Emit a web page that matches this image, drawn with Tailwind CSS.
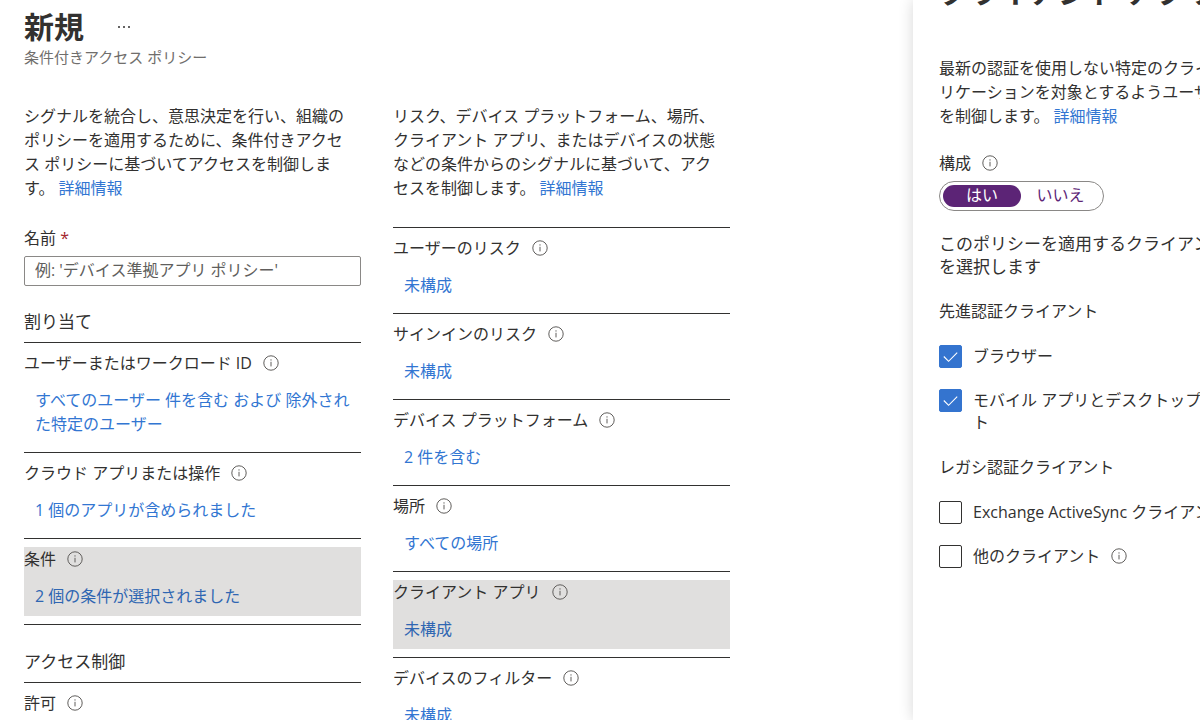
<!DOCTYPE html>
<html lang="ja">
<head>
  <meta charset="UTF-8" />
  <meta name="viewport" content="width=device-width, initial-scale=1.0" />
  <title>新規 - 条件付きアクセス ポリシー</title>
  <script src="https://cdn.jsdelivr.net/npm/@tailwindcss/browser@4"></script>
</head>
<body class="flex h-screen overflow-hidden bg-white font-['Open_Sans','Noto_Sans_CJK_JP',sans-serif] text-[16px] leading-[24px] text-[#323130]">

  <!-- info icon, reused below -->
  <svg class="hidden" aria-hidden="true">
    <symbol id="info" viewBox="0 0 16 16">
      <circle cx="8" cy="8" r="7.2" fill="none" stroke="currentColor" stroke-width="1" />
      <path d="M8 6.8v4.6" stroke="currentColor" stroke-width="1" />
      <circle cx="8" cy="4.9" r="0.7" fill="currentColor" />
    </symbol>
  </svg>

  <main class="w-[913px] shrink-0 pl-6 pt-[9px]">
    <header>
      <div class="flex items-center gap-8">
        <h1 class="text-[30px] leading-[36px] font-bold">新規</h1>
        <button type="button" aria-label="その他" class="flex h-6 w-4 items-center justify-between px-0.5">
          <span class="size-0.5 rounded-full bg-[#323130]"></span>
          <span class="size-0.5 rounded-full bg-[#323130]"></span>
          <span class="size-0.5 rounded-full bg-[#323130]"></span>
        </button>
      </div>
      <p class="text-[15px] text-[#706e6c]">条件付きアクセス ポリシー</p>
    </header>

    <div class="mt-[35px] flex gap-8">
      <section class="w-[337px]">
        <p>シグナルを統合し、意思決定を行い、組織の<br />ポリシーを適用するために、条件付きアクセ<br />ス ポリシーに基づいてアクセスを制御しま<br />す。 <a href="#" class="text-[#3276d2]">詳細情報</a></p>

        <label for="name" class="mt-[26px] block">名前 <span class="text-[#a4262c]">*</span></label>
        <input type="text" id="name" placeholder="例: 'デバイス準拠アプリ ポリシー'" class="mt-1.5 block h-[30px] w-full rounded-xs border border-[#8a8886] px-2.5 pb-0.5 placeholder:text-[#605e5c]" />

        <h2 class="mt-6 mb-2 text-[17px]">割り当て</h2>
        <div class="border-t border-[#323130] pt-2 pb-4">
          <h3 class="flex items-center gap-[11px]">ユーザーまたはワークロード ID <svg class="size-4 text-[#605e5c]"><use href="#info" /></svg></h3>
          <a href="#" class="mt-[13px] ml-[11px] block text-[#3276d2]">すべてのユーザー 件を含む および 除外され<br />た特定のユーザー</a>
        </div>
        <div class="border-t border-[#323130] pt-2 pb-4">
          <h3 class="flex items-center gap-[11px]">クラウド アプリまたは操作 <svg class="size-4 text-[#605e5c]"><use href="#info" /></svg></h3>
          <a href="#" class="mt-[13px] ml-[11px] block text-[#3276d2]">1 個のアプリが含められました</a>
        </div>
        <div class="border-y border-[#323130] py-2">
          <div class="bg-[#e0dfde] pb-2">
            <h3 class="flex items-center gap-[11px]">条件 <svg class="size-4 text-[#605e5c]"><use href="#info" /></svg></h3>
            <a href="#" class="mt-[13px] ml-[11px] block text-[#2f66b2]">2 個の条件が選択されました</a>
          </div>
        </div>

        <h2 class="mt-[25px] mb-2 text-[17px]">アクセス制御</h2>
        <div class="border-t border-[#323130] pt-2 pb-4">
          <h3 class="flex items-center gap-[11px]">許可 <svg class="size-4 text-[#605e5c]"><use href="#info" /></svg></h3>
        </div>
      </section>

      <section class="w-[337px]">
        <p class="mb-[27px]">リスク、デバイス プラットフォーム、場所、<br />クライアント アプリ、またはデバイスの状態<br />などの条件からのシグナルに基づいて、アク<br />セスを制御します。 <a href="#" class="text-[#3276d2]">詳細情報</a></p>

        <div class="border-t border-[#323130] pt-2 pb-4">
          <h3 class="flex items-center gap-[11px]">ユーザーのリスク <svg class="size-4 text-[#605e5c]"><use href="#info" /></svg></h3>
          <a href="#" class="mt-[13px] ml-[11px] block text-[#3276d2]">未構成</a>
        </div>
        <div class="border-t border-[#323130] pt-2 pb-4">
          <h3 class="flex items-center gap-[11px]">サインインのリスク <svg class="size-4 text-[#605e5c]"><use href="#info" /></svg></h3>
          <a href="#" class="mt-[13px] ml-[11px] block text-[#3276d2]">未構成</a>
        </div>
        <div class="border-t border-[#323130] pt-2 pb-4">
          <h3 class="flex items-center gap-[11px]">デバイス プラットフォーム <svg class="size-4 text-[#605e5c]"><use href="#info" /></svg></h3>
          <a href="#" class="mt-[13px] ml-[11px] block text-[#3276d2]">2 件を含む</a>
        </div>
        <div class="border-t border-[#323130] pt-2 pb-4">
          <h3 class="flex items-center gap-[11px]">場所 <svg class="size-4 text-[#605e5c]"><use href="#info" /></svg></h3>
          <a href="#" class="mt-[13px] ml-[11px] block text-[#3276d2]">すべての場所</a>
        </div>
        <div class="border-t border-[#323130] py-2">
          <div class="bg-[#e0dfde] pb-2">
            <h3 class="flex items-center gap-[11px]">クライアント アプリ <svg class="size-4 text-[#605e5c]"><use href="#info" /></svg></h3>
            <a href="#" class="mt-[13px] ml-[11px] block text-[#2f66b2]">未構成</a>
          </div>
        </div>
        <div class="border-t border-[#323130] pt-2 pb-4">
          <h3 class="flex items-center gap-[11px]">デバイスのフィルター <svg class="size-4 text-[#605e5c]"><use href="#info" /></svg></h3>
          <a href="#" class="mt-[13px] ml-[11px] block text-[#3276d2]">未構成</a>
        </div>
      </section>
    </div>
  </main>

  <!-- client apps panel -->
  <aside class="min-w-0 flex-1 bg-white pl-[26px] whitespace-nowrap shadow-[0_0_14px_rgba(0,0,0,0.16)]">
    <h2 class="-mt-[26px] text-[30px] leading-[36px] font-bold">クライアント アプリ</h2>
    <p class="mt-[46px]">最新の認証を使用しない特定のクライアント アプ<br />リケーションを対象とするようユーザーのアクセス<br />を制御します。 <a href="#" class="text-[#3276d2]">詳細情報</a></p>

    <fieldset class="mt-[23px]">
      <legend class="flex items-center gap-[11px]">構成 <svg class="size-4 text-[#605e5c]"><use href="#info" /></svg></legend>
      <div class="mt-1.5 flex h-[30px] w-[165px] rounded-full border border-[#8a8886] p-[3px] leading-[20px] text-[#5c2476]">
        <label class="w-[78px] rounded-full text-center has-checked:bg-[#5c2476] has-checked:text-white"><input type="radio" name="configure" class="sr-only" checked />はい</label>
        <label class="flex-1 rounded-full text-center has-checked:bg-[#5c2476] has-checked:text-white"><input type="radio" name="configure" class="sr-only" />いいえ</label>
      </div>
    </fieldset>

    <p class="mt-[21px] text-[17px] leading-[23px]">このポリシーを適用するクライアント アプリ<br />を選択します</p>

    <h3 class="mt-[21px]">先進認証クライアント</h3>
    <div class="mt-[22px] grid gap-[21px] leading-[22px]">
      <label class="flex items-start gap-[11px]">
        <span class="grid shrink-0">
          <input type="checkbox" class="peer col-start-1 row-start-1 size-[23px] appearance-none rounded-xs border border-[#323130] checked:border-[#3474cf] checked:bg-[#3474cf]" checked />
          <svg class="pointer-events-none col-start-1 row-start-1 hidden size-[23px] text-white peer-checked:block" viewBox="0 0 24 24" fill="none" stroke="currentColor" stroke-width="1.2"><path d="M5 12l5 5 9-9" /></svg>
        </span>
        ブラウザー
      </label>
      <label class="flex items-start gap-[11px]">
        <span class="grid shrink-0">
          <input type="checkbox" class="peer col-start-1 row-start-1 size-[23px] appearance-none rounded-xs border border-[#323130] checked:border-[#3474cf] checked:bg-[#3474cf]" checked />
          <svg class="pointer-events-none col-start-1 row-start-1 hidden size-[23px] text-white peer-checked:block" viewBox="0 0 24 24" fill="none" stroke="currentColor" stroke-width="1.2"><path d="M5 12l5 5 9-9" /></svg>
        </span>
        <span>モバイル アプリとデスクトップ クライアン<br />ト</span>
      </label>
    </div>

    <h3 class="mt-[22px]">レガシ認証クライアント</h3>
    <div class="mt-[22px] grid gap-[21px] leading-[22px]">
      <label class="flex items-start gap-[11px]">
        <input type="checkbox" class="size-[23px] shrink-0 appearance-none rounded-xs border border-[#323130] checked:bg-[#3474cf]" />
        Exchange ActiveSync クライアント
      </label>
      <label class="flex items-start gap-[11px]">
        <input type="checkbox" class="size-[23px] shrink-0 appearance-none rounded-xs border border-[#323130] checked:bg-[#3474cf]" />
        <span class="flex items-center gap-[11px]">他のクライアント <svg class="size-4 text-[#605e5c]"><use href="#info" /></svg></span>
      </label>
    </div>
  </aside>

</body>
</html>
